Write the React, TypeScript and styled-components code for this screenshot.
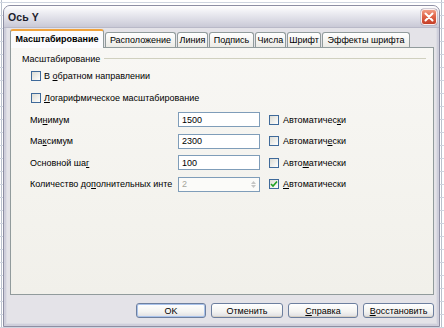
import React from 'react';
import styled, { createGlobalStyle } from 'styled-components';

const Global = createGlobalStyle`
  html, body { margin: 0; padding: 0; }
  body {
    width: 444px; height: 328px; overflow: hidden; background: #fff;
    font-family: "Liberation Sans", Arial, sans-serif;
  }
`;

const Desktop = styled.div`
  width: 444px; height: 328px; box-sizing: border-box;
  padding: 5px 4px 1px 3px;
  background-color: #fff;
  background-image: linear-gradient(to bottom, #cfd5e0 1px, transparent 1px),
    linear-gradient(to right, #b9c0cc 1px, transparent 1px);
  background-size: 100% 13px, 440px 100%;
  background-position: 0 2px, 1px 0;
`;

const Window = styled.div`
  width: 437px; height: 322px; box-sizing: border-box;
  display: flex; flex-direction: column;
  border: 1px solid #8d8ea3; border-radius: 7px 7px 0 0;
  background: #e4e3e8;
  box-shadow: inset 0 0 0 2px #cfcfdb, inset 0 0 0 3px #dcdce4;
  overflow: hidden;
`;

const TitleBar = styled.div`
  height: 21px; flex: none;
  display: flex; align-items: center; justify-content: space-between;
  padding: 0 1px 0 4px;
  background: linear-gradient(to bottom, #ffffff 0%, #f1f1f5 25%, #dedee7 60%, #c9c9d6 100%);
  border-bottom: 1px solid #b9b9c8;
`;

const Title = styled.span`
  font-size: 10.5px; font-weight: bold; color: #1d1d2c; letter-spacing: 0.1px;
`;

const CloseBtn = styled.div`
  width: 18px; height: 18px; flex: none; display: flex;
`;

const Body = styled.div`
  flex: 1; display: flex; flex-direction: column;
  padding: 1px 5px 0 6px;
`;

const TabStrip = styled.div`
  display: flex; align-items: flex-end; height: 18px; position: relative; z-index: 1;
`;

const Tab = styled.div<{ $w: number; $active?: boolean }>`
  width: ${p => p.$w}px; box-sizing: border-box;
  height: ${p => (p.$active ? 19 : 15)}px;
  margin-left: ${p => (p.$active ? 0 : 1)}px;
  margin-bottom: ${p => (p.$active ? -1 : 0)}px;
  border: 1px solid #919b9c; border-bottom: none;
  border-top: ${p => (p.$active ? '2px solid #f0a33c' : '1px solid #919b9c')};
  border-radius: 3px 3px 0 0;
  background: ${p => (p.$active ? '#fcfcfe' : 'linear-gradient(to bottom, #ffffff, #ecebe6)')};
  font-size: 9px; font-weight: ${p => (p.$active ? 'bold' : 'normal')};
  color: #000;
  display: flex; align-items: center; justify-content: center;
  white-space: nowrap;
  padding-bottom: ${p => (p.$active ? 1 : 0)}px;
`;

const Page = styled.div`
  width: 424px; height: 248px; box-sizing: border-box;
  border: 1px solid #919b9c;
  background: linear-gradient(to bottom, #f8f7f4, #f1f0ea);
  padding: 5px 7px 0 11px;
  display: flex; flex-direction: column;
`;

const GroupHeader = styled.div`
  display: flex; align-items: center; gap: 4px; height: 11px;
  font-size: 9px; color: #000;
`;

const GroupLine = styled.div`
  flex: 1; height: 1px; background: #d0d0bf;
`;

const CheckRow = styled.label<{ $top: number }>`
  display: flex; align-items: center; gap: 3px;
  margin: ${p => p.$top}px 0 0 9px;
  font-size: 9px; color: #000; height: 12px;
`;

const Box = styled.span`
  width: 10px; height: 10px; box-sizing: border-box; flex: none;
  border: 1px solid #3f6a9a;
  background: linear-gradient(135deg, #dcdcd4, #ffffff);
  display: inline-flex; align-items: center; justify-content: center;
`;

const Fields = styled.div`
  display: flex; flex-direction: column; gap: 6.5px;
  margin: 8px 0 0 8px;
`;

const FieldRow = styled.div`
  display: flex; align-items: center; height: 15px;
`;

const FieldLabel = styled.span`
  width: 148px; flex: none; font-size: 9px; color: #000; white-space: nowrap;
`;

const Input = styled.div<{ $disabled?: boolean }>`
  width: 82px; height: 15px; box-sizing: border-box; flex: none;
  border: 1px solid #7f9db9; background: ${p => (p.$disabled ? '#fbfbf9' : '#fff')};
  font-size: 9px; color: ${p => (p.$disabled ? '#a6a69c' : '#000')};
  padding: 0 3px; display: flex; align-items: center; justify-content: space-between;
`;

const Spin = styled.div`
  display: flex; flex-direction: column; gap: 1px; opacity: 0.4;
`;

const AutoCheck = styled.span`
  display: flex; align-items: center; gap: 4px; margin-left: 9px;
  font-size: 9px; color: #000;
`;

const ButtonRow = styled.div`
  display: flex; justify-content: flex-end; gap: 5px;
  margin-top: 8px;
`;

const Button = styled.div<{ $w: number; $default?: boolean }>`
  width: ${p => p.$w}px; height: 15px; box-sizing: border-box;
  border: 1px solid #6d7f9f; border-radius: 3px;
  background: linear-gradient(to bottom, #ffffff 0%, #f3f3f1 60%, #dedee2 100%);
  box-shadow: ${p => (p.$default ? 'inset 0 0 0 1px #a9c2ea' : 'inset 0 -1px 0 #d6d0c5')};
  font-size: 9px; color: #000;
  display: flex; align-items: center; justify-content: center;
`;

const U = styled.span`
  text-decoration: underline;
`;

const CheckMark = () => (
  <svg width="8" height="8" viewBox="0 0 8 8">
    <path d="M1 4 L3 6 L7 1.5" stroke="#21a121" strokeWidth="1.6" fill="none" />
  </svg>
);

const CloseIcon = () => (
  <svg width="18" height="18" viewBox="0 0 18 18">
    <defs>
      <linearGradient id="cg" x1="0" y1="0" x2="0" y2="1">
        <stop offset="0" stopColor="#f2a088" />
        <stop offset="0.45" stopColor="#e0654a" />
        <stop offset="1" stopColor="#c23b24" />
      </linearGradient>
    </defs>
    <rect x="0.5" y="0.5" width="17" height="17" rx="3" fill="#a9a3b4" />
    <rect x="1.5" y="1.5" width="15" height="15" rx="2.5" fill="url(#cg)" stroke="#fbeeee" strokeWidth="1" />
    <path d="M5.5 5.5 L12.5 12.5 M12.5 5.5 L5.5 12.5" stroke="#ffffff" strokeWidth="2" strokeLinecap="round" />
  </svg>
);

const rows: { label: React.ReactNode; value: string; disabled?: boolean; auto: React.ReactNode; checked?: boolean }[] = [
  { label: <>Ми<U>н</U>имум</>, value: '1500', auto: <>Автоматичес<U>к</U>и</> },
  { label: <>Ма<U>к</U>симум</>, value: '2300', auto: <>Автоматич<U>е</U>ски</> },
  { label: <>Основной ша<U>г</U></>, value: '100', auto: <>Авто<U>м</U>атически</> },
  { label: <>Количество до<U>п</U>олнительных инте</>, value: '2', disabled: true, auto: <><U>А</U>втоматически</>, checked: true },
];

export default function App() {
  return (
    <>
      <Global />
      <Desktop>
        <Window>
          <TitleBar>
            <Title>Ось Y</Title>
            <CloseBtn>
              <CloseIcon />
            </CloseBtn>
          </TitleBar>
          <Body>
            <TabStrip>
              <Tab $w={94} $active>Масштабирование</Tab>
              <Tab $w={71}>Расположение</Tab>
              <Tab $w={31}>Линия</Tab>
              <Tab $w={45}>Подпись</Tab>
              <Tab $w={31}>Числа</Tab>
              <Tab $w={34}>Шрифт</Tab>
              <Tab $w={88}>Эффекты шрифта</Tab>
            </TabStrip>
            <Page>
              <GroupHeader>
                Масштабирование
                <GroupLine />
              </GroupHeader>
              <CheckRow $top={6}>
                <Box />
                <span>В <U>о</U>братном направлении</span>
              </CheckRow>
              <CheckRow $top={10}>
                <Box />
                <span><U>Л</U>огарифмическое масштабирование</span>
              </CheckRow>
              <Fields>
                {rows.map((r, i) => (
                  <FieldRow key={i}>
                    <FieldLabel>{r.label}</FieldLabel>
                    <Input $disabled={r.disabled}>
                      <span>{r.value}</span>
                      {r.disabled && (
                        <Spin>
                          <svg width="5" height="3" viewBox="0 0 5 3"><path d="M0 3 L2.5 0 L5 3Z" fill="#777" /></svg>
                          <svg width="5" height="3" viewBox="0 0 5 3"><path d="M0 0 L2.5 3 L5 0Z" fill="#777" /></svg>
                        </Spin>
                      )}
                    </Input>
                    <AutoCheck>
                      <Box>{r.checked && <CheckMark />}</Box>
                      <span>{r.auto}</span>
                    </AutoCheck>
                  </FieldRow>
                ))}
              </Fields>
            </Page>
            <ButtonRow>
              <Button $w={70} $default>OK</Button>
              <Button $w={72}>Отменить</Button>
              <Button $w={70}><U>С</U>правка</Button>
              <Button $w={71}><U>В</U>осстановить</Button>
            </ButtonRow>
          </Body>
        </Window>
      </Desktop>
    </>
  );
}
